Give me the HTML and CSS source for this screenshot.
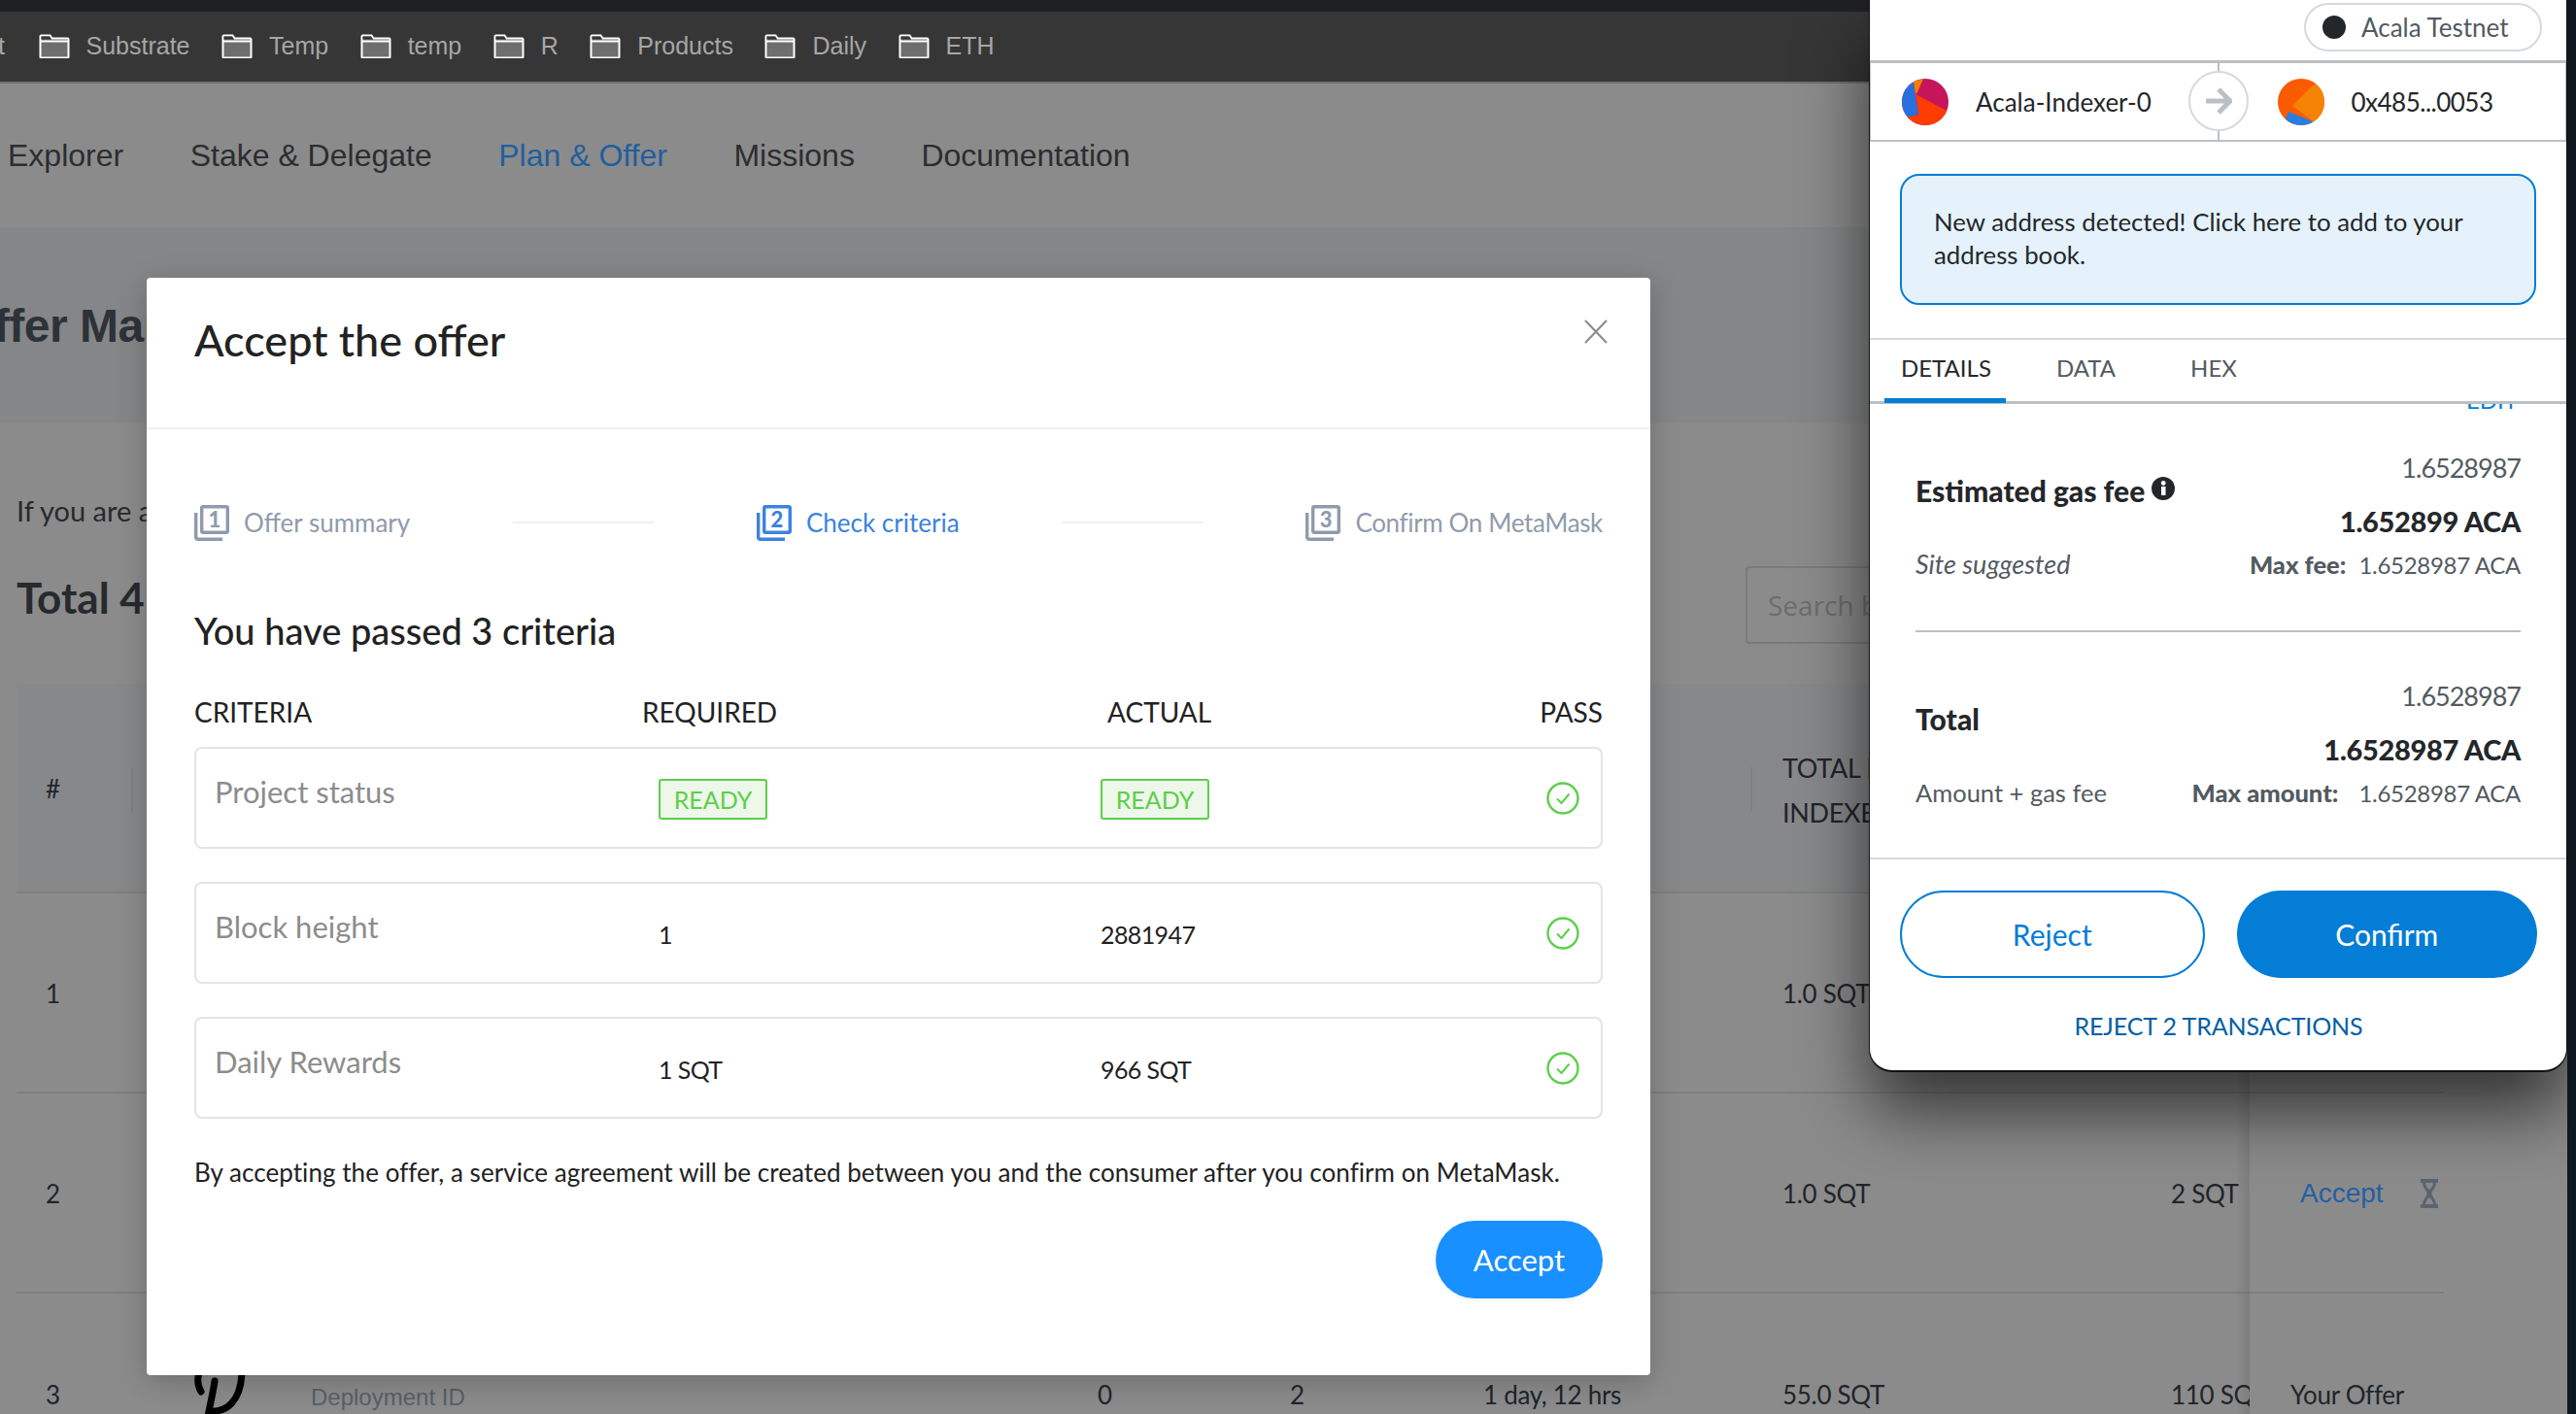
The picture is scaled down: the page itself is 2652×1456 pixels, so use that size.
FILE: index.html
```html
<!DOCTYPE html>
<html lang="en">
<head>
<meta charset="UTF-8" />
<title>Accept the offer</title>
<link rel="stylesheet" href="styles.css">
</head>
<body>
<svg class="defs" width="0" height="0">
  <symbol id="folder" viewBox="0 0 32 25">
    <path d="M1.5 23.5V2.5q0-1 1-1h9l2 3h16q1 0 1 1v18q0 1-1 1h-27q-1 0-1-1z" fill="#6e6e6e" stroke="#fff" stroke-width="2"/>
    <path d="M1.5 7.5h29" stroke="#fff" stroke-width="2"/>
    <path d="M2.5 2.5h8.5l2 3h-10.500z" fill="#363636"/>
  </symbol>
  <symbol id="check" viewBox="0 0 34 34">
    <circle cx="17" cy="17" r="15.500" fill="none" stroke="#5ccf49" stroke-width="2.400"/>
    <path d="M11 17.500l4.500 4.500 8-9.500" fill="none" stroke="#5ccf49" stroke-width="2"/>
  </symbol>
</svg>

<div class="browser">
  <div class="tabstrip"></div>
  <div class="bookmarks">
    <span class="cut">t</span>
    <a class="mark"><svg class="folder"><use href="#folder"/></svg>Substrate</a>
    <a class="mark"><svg class="folder"><use href="#folder"/></svg>Temp</a>
    <a class="mark"><svg class="folder"><use href="#folder"/></svg>temp</a>
    <a class="mark"><svg class="folder"><use href="#folder"/></svg>R</a>
    <a class="mark"><svg class="folder"><use href="#folder"/></svg>Products</a>
    <a class="mark"><svg class="folder"><use href="#folder"/></svg>Daily</a>
    <a class="mark"><svg class="folder"><use href="#folder"/></svg>ETH</a>
  </div>

  <nav class="topnav">
    <a>Explorer</a>
    <a>Stake &amp; Delegate</a>
    <a class="current">Plan &amp; Offer</a>
    <a>Missions</a>
    <a>Documentation</a>
  </nav>

  <div class="page-head">
    <h1>Offer Management</h1>
  </div>

  <section class="intro">
    <p>If you are an indexer</p>
    <div class="intro-row">
      <h2>Total 4</h2>
      <div class="search">Search by deployment</div>
    </div>
  </section>

  <div class="table">
    <div class="thead">
      <span class="th-hash">#</span>
      <span class="sep sep-a"></span>
      <span class="sep sep-b"></span>
      <span class="th-total">TOTAL FEES<br>INDEXED</span>
    </div>
    <div class="row">
      <span>1</span><span></span><span></span><span></span><span></span><span>1.0 SQT</span><span></span><span></span>
    </div>
    <div class="row">
      <span>2</span><span></span><span></span><span></span><span></span><span>1.0 SQT</span><span class="clip">2 SQT</span>
      <span class="action">
        <a>Accept</a>
        <svg class="hourglass" viewBox="0 0 18 30"><path d="M0 0h18v4h-2c0 5-4 7-4.500 11 .5 4 4.500 6 4.500 11h2v4H0v-4h2c0-5 4-7 4.500-11C6 11 2 9 2 4H0z" fill="#5b6570"/><path d="M5 4h8c0 3-2 5-4 7-2-2-4-4-4-7zM5 26c0-3 2-5 4-7 2 2 4 4 4 7z" fill="#8a8a8a"/></svg>
      </span>
    </div>
    <div class="row row-last">
      <span>3</span>
      <span class="deploy">Deployment ID</span>
      <span>0</span><span>2</span><span>1 day, 12 hrs</span><span>55.0 SQT</span><span class="clip">110 SQT</span><span class="your">Your Offer</span>
    </div>
    <div class="fixed-shade"></div>
  </div>

  <svg class="deploy-logo" viewBox="0 0 60 40"><path d="M9-2c-2 6-2 12 2 19M25 6c-1 8-4 22-7 36M19 37c18 2 33-10 34-40" fill="none" stroke="#000" stroke-width="7" stroke-linecap="round"/></svg>

  <div class="modal">
    <header class="modal-head">
      <h3>Accept the offer</h3>
      <svg class="close" viewBox="0 0 24 25"><path d="M1 1l22 23M23 1L1 24" stroke="#8c8c8c" stroke-width="2.200" fill="none"/></svg>
    </header>
    <div class="modal-body">
      <div class="steps">
        <div class="step">
          <svg class="step-icon" viewBox="0 0 36 37"><path d="M1.700 8v25q0 2.300 2.300 2.300h25" fill="none" stroke="currentColor" stroke-width="3.400"/><rect x="7.700" y="1.700" width="26.600" height="26.600" rx="1.500" fill="none" stroke="currentColor" stroke-width="3.400"/><text x="21" y="22.500" text-anchor="middle" class="step-num">1</text></svg>
          Offer summary
        </div>
        <span class="step-line"></span>
        <div class="step step-on">
          <svg class="step-icon" viewBox="0 0 36 37"><path d="M1.700 8v25q0 2.300 2.300 2.300h25" fill="none" stroke="currentColor" stroke-width="3.400"/><rect x="7.700" y="1.700" width="26.600" height="26.600" rx="1.500" fill="none" stroke="currentColor" stroke-width="3.400"/><text x="21" y="22.500" text-anchor="middle" class="step-num">2</text></svg>
          Check criteria
        </div>
        <span class="step-line"></span>
        <div class="step step-last">
          <svg class="step-icon" viewBox="0 0 36 37"><path d="M1.700 8v25q0 2.300 2.300 2.300h25" fill="none" stroke="currentColor" stroke-width="3.400"/><rect x="7.700" y="1.700" width="26.600" height="26.600" rx="1.500" fill="none" stroke="currentColor" stroke-width="3.400"/><text x="21" y="22.500" text-anchor="middle" class="step-num">3</text></svg>
          Confirm On MetaMask
        </div>
      </div>

      <h4>You have passed 3 criteria</h4>

      <div class="crit-head">
        <span>CRITERIA</span><span>REQUIRED</span><span>ACTUAL</span><span>PASS</span>
      </div>
      <div class="crit-row">
        <span class="crit-name">Project status</span>
        <span><b class="badge">READY</b></span>
        <span><b class="badge">READY</b></span>
        <svg class="tick"><use href="#check"/></svg>
      </div>
      <div class="crit-row">
        <span class="crit-name">Block height</span>
        <span class="crit-val">1</span>
        <span class="crit-val">2881947</span>
        <svg class="tick"><use href="#check"/></svg>
      </div>
      <div class="crit-row">
        <span class="crit-name">Daily Rewards</span>
        <span class="crit-val">1 SQT</span>
        <span class="crit-val">966 SQT</span>
        <svg class="tick"><use href="#check"/></svg>
      </div>

      <p class="note">By accepting the offer, a service agreement will be created between you and the consumer after you confirm on MetaMask.</p>
      <div class="modal-foot"><button class="accept">Accept</button></div>
    </div>
  </div>

  <div class="wallet">
    <div class="net-bar">
      <div class="net-pill"><i class="net-dot"></i>Acala Testnet</div>
    </div>
    <div class="route">
      <div class="party">
        <svg class="jazz" viewBox="0 0 48 48"><defs><clipPath id="ca"><circle cx="24" cy="24" r="24"/></clipPath></defs><g clip-path="url(#ca)"><rect width="48" height="48" fill="#c6155a"/><path d="M14 16L48 34V48H0L4 39 17 37z" fill="#fc3c00"/><path d="M12 4L17 37 3 40-2 20 0 5z" fill="#2a6fe0"/><path d="M12 3L22 0 16 14 14 16z" fill="#f47f00"/></g></svg>
        <span>Acala-Indexer-0</span>
      </div>
      <div class="party party-to">
        <svg class="jazz" viewBox="0 0 48 48"><defs><clipPath id="cb"><circle cx="24" cy="24" r="24"/></clipPath></defs><g clip-path="url(#cb)"><rect width="48" height="48" fill="#fa5a00"/><path d="M37 6L15 28 36 44 48 40V10z" fill="#f48304"/><path d="M11 34L36 44V48H10L7 44z" fill="#2a7de1"/><path d="M34 0L38 5 40 2z" fill="#f5119c"/></g></svg>
        <span>0x485...0053</span>
      </div>
      <div class="route-arrow">
        <svg viewBox="0 0 28 28" width="28" height="28"><path d="M1 14H25M14 2L26 14 14 26" fill="none" stroke="#bbc0c5" stroke-width="5"/></svg>
      </div>
    </div>
    <div class="notice">New address detected! Click here to add to your address book.</div>
    <div class="wtabs">
      <span class="wtab wtab-on">DETAILS</span>
      <span class="wtab wtab-data">DATA</span>
      <span class="wtab">HEX</span>
    </div>
    <div class="edit-clip"><span>EDIT</span></div>
    <div class="fee fee-first">
      <div class="fee-top">
        <div class="fee-label">Estimated gas fee
          <svg class="info" viewBox="0 0 24 24"><circle cx="12" cy="12" r="12" fill="#24272a"/><rect x="10" y="10" width="4.500" height="9" fill="#fff"/><circle cx="12.200" cy="6.500" r="2.400" fill="#fff"/></svg>
        </div>
        <div class="fee-amounts">
          <div class="fee-light">1.6528987</div>
          <div class="fee-strong">1.652899 ACA</div>
        </div>
      </div>
      <div class="fee-sub">
        <em>Site suggested</em>
        <span><b>Max fee:</b><i class="fee-val">1.6528987 ACA</i></span>
      </div>
    </div>
    <div class="fee">
      <div class="fee-top">
        <div class="fee-label">Total</div>
        <div class="fee-amounts">
          <div class="fee-light">1.6528987</div>
          <div class="fee-strong">1.6528987 ACA</div>
        </div>
      </div>
      <div class="fee-sub">
        <span>Amount + gas fee</span>
        <span><b class="wide">Max amount:</b><i class="fee-val">1.6528987 ACA</i></span>
      </div>
    </div>
    <div class="wallet-foot">
      <div class="wallet-btns">
        <button class="btn-line">Reject</button>
        <button class="btn-fill">Confirm</button>
      </div>
      <a class="reject-all">REJECT 2 TRANSACTIONS</a>
    </div>
  </div>
</div>
</body>
</html>
```

FILE: styles.css
```css
* {
  box-sizing: border-box;
}
html, body {
  margin: 0;
  height: 100%;
  overflow: hidden;
}
body {
  background: #0f171e;
  font-family: "Lato", sans-serif;
}
.defs {
  position: absolute;
}

/* browser frame */
.browser {
  position: relative;
  width: 2643px;
  height: 1456px;
  overflow: hidden;
  background: #8b8b8b;
}
.tabstrip {
  height: 12px;
  background: #1f2024;
}
.bookmarks {
  display: flex;
  align-items: center;
  gap: 32.500px;
  height: 74px;
  padding-bottom: 2px;
  background: #363636;
  border-bottom: 2px solid #6f6f6f;
  color: #a6a6a6;
  font: 25px "Liberation Sans", sans-serif;
}
.cut {
  margin-left: -2px;
  width: 9px;
}
.mark {
  display: flex;
  align-items: center;
  gap: 17px;
}
.folder {
  width: 32px;
  height: 25px;
}

/* top nav */
.topnav {
  display: flex;
  align-items: center;
  gap: 68.500px;
  height: 148px;
  padding-left: 8px;
  color: #2b2d30;
  font: 32px "Liberation Sans", sans-serif;
}
.topnav .current {
  color: #1f5f9f;
}

/* page behind the modal */
.page-head {
  height: 202px;
  background: #858687;
}
.page-head h1 {
  margin: 0 0 0 -43px;
  padding-top: 74px;
  color: #2c3238;
  font: bold 48px/56px "Liberation Sans", sans-serif;
  letter-spacing: -.5px;
}
.intro {
  height: 268px;
  padding: 72px 0 0 17px;
  color: #262a2e;
}
.intro p {
  margin: 0;
  font-size: 29px;
  line-height: 36px;
}
.intro-row {
  display: flex;
  justify-content: space-between;
  margin-top: 39px;
}
.intro h2 {
  margin: 4px 0 0;
  font-size: 44px;
  line-height: 56px;
}
.search {
  width: 846px;
  height: 80px;
  padding: 0 21px;
  border: 2px solid #7a7a7a;
  border-radius: 4px;
  color: #6d6d6d;
  font: 28px/76px "Open Sans", sans-serif;
}

.table {
  position: relative;
  width: 2499px;
  margin-left: 17px;
  color: #20242a;
  font-size: 26px;
  letter-spacing: -.3px;
}
.thead {
  position: relative;
  height: 216px;
  background: #87888a;
  border-bottom: 2px solid #7e7e7e;
}
.th-hash {
  position: absolute;
  left: 30px;
  top: 92px;
}
.th-total {
  position: absolute;
  left: 1818px;
  top: 64px;
  white-space: nowrap;
  font-size: 27px;
  line-height: 46px;
}
.sep {
  position: absolute;
  top: 86px;
  width: 2px;
  height: 46px;
  background: #7f7f7f;
}
.sep-a {
  left: 118px;
}
.sep-b {
  left: 1785px;
}
.row {
  display: grid;
  grid-template-columns: 273px 810px 198px 199px 308px 400px 81px 1fr;
  align-items: center;
  height: 206px;
  padding: 2px 0 0 30px;
  border-bottom: 2px solid #7e7e7e;
}
.row-last {
  padding-top: 2px;
  border-bottom: 0;
}
.clip {
  overflow: hidden;
  white-space: nowrap;
}
.action {
  display: flex;
  align-items: center;
  gap: 38px;
  padding-left: 52px;
}
.action a {
  color: #2460a4;
  letter-spacing: 0;
  font: 28px "Liberation Sans", sans-serif;
}
.hourglass {
  width: 18px;
  height: 30px;
}
.your {
  padding-left: 42px;
  white-space: nowrap;
}
.deploy {
  padding-top: 5px;
  color: #575f69;
  letter-spacing: 0;
  font: 24px "Liberation Sans", sans-serif;
}
.fixed-shade {
  position: absolute;
  left: 2284px;
  top: 0;
  bottom: 0;
  width: 15px;
  background: linear-gradient(90deg, rgba(0,0,0,0), rgba(0,0,0,.1));
}
.deploy-logo {
  position: absolute;
  left: 196px;
  top: 1416px;
  width: 60px;
  height: 40px;
}

/* modal */
.modal {
  position: absolute;
  left: 151px;
  top: 286px;
  width: 1548px;
  height: 1130px;
  background: #fff;
  border-radius: 4px;
  box-shadow: 0 6px 30px rgba(0, 0, 0, .22);
  color: #222;
}
.modal-head {
  display: flex;
  justify-content: space-between;
  height: 156px;
  padding: 39px 49px 0;
  border-bottom: 2px solid #f0f0f0;
}
.modal-head h3 {
  margin: 0;
  font-size: 45px;
  font-weight: 500;
  line-height: 50px;
}
.close {
  width: 24px;
  height: 25px;
  margin: 4px -5px 0 0;
}
.modal-body {
  padding: 77px 49px 0;
}
.steps {
  display: flex;
  justify-content: space-between;
  align-items: center;
  height: 38px;
}
.step {
  display: flex;
  align-items: center;
  gap: 15px;
  color: #8f9bab;
  font-size: 26px;
}
.step-last {
  letter-spacing: -.35px;
}
.step-on {
  color: #3c82e0;
}
.step-icon {
  width: 36px;
  height: 37px;
}
.step-num {
  fill: currentColor;
  font: 900 22px "Lato", sans-serif;
}
.step-line {
  width: 146px;
  height: 2px;
  background: #f0f0f0;
}
.modal-body h4 {
  margin: 70px 0 0;
  font-size: 38px;
  font-weight: 500;
  line-height: 44px;
}
.crit-head {
  display: grid;
  grid-template-columns: 461px 479px 1fr auto;
  margin-top: 42px;
  font-size: 28px;
  line-height: 40px;
}
.crit-row {
  display: grid;
  grid-template-columns: 457px 455px 1fr 34px;
  align-items: center;
  height: 105px;
  margin-top: 34px;
  padding: 0 22px 0 19px;
  border: 2px solid #e1e4e9;
  border-radius: 8px;
  font-size: 25px;
  letter-spacing: -.6px;
}
.crit-head + .crit-row {
  margin-top: 16px;
}
.crit-name {
  margin-bottom: 14px;
  color: #8c8c8c;
  font-size: 31px;
  letter-spacing: 0;
}
.crit-val {
  margin-top: 2px;
}
.badge {
  display: inline-block;
  width: 112px;
  height: 42px;
  margin-top: 2px;
  border: 2px solid #5ccf49;
  border-radius: 3px;
  background: #edf7ea;
  color: #5ccf49;
  font-size: 25px;
  font-weight: 400;
  letter-spacing: 0;
  line-height: 38px;
  text-align: center;
}
.tick {
  width: 34px;
  height: 34px;
}
.note {
  margin: 37px 0 0;
  font-size: 26px;
  letter-spacing: .05px;
  line-height: 36px;
  white-space: nowrap;
}
.modal-foot {
  display: flex;
  justify-content: flex-end;
  margin-top: 32px;
}
.accept {
  width: 172px;
  height: 80px;
  border: 0;
  border-radius: 40px;
  background: #1890ff;
  box-shadow: 0 3px 0 rgba(0, 0, 0, .03);
  color: #fff;
  font: 31px "Lato", sans-serif;
}

/* wallet popup */
.wallet {
  position: absolute;
  left: 1924px;
  top: 0;
  display: flex;
  flex-direction: column;
  width: 719px;
  height: 1104px;
  background: #fff;
  border: solid #111;
  border-width: 0 1px 2px;
  border-radius: 0 0 24px 24px;
  box-shadow: 0 40px 70px rgba(0, 0, 0, .62);
  color: #24272a;
  font-size: 26px;
}
.net-bar {
  display: flex;
  justify-content: flex-end;
  height: 62px;
  padding: 3px 25px 0 0;
}
.net-pill {
  display: flex;
  align-items: center;
  width: 245px;
  height: 50px;
  padding-left: 17px;
  gap: 16px;
  border: 2px solid #d6d9dc;
  border-radius: 25px;
  color: #535a61;
  white-space: nowrap;
}
.net-dot {
  width: 24px;
  height: 24px;
  border-radius: 50%;
  background: #24272a;
}
.route {
  position: relative;
  display: grid;
  grid-template-columns: 1fr 1fr;
  height: 84px;
  border: solid #bbc0c5;
  border-width: 3px 1px 2px;
}
.party {
  display: flex;
  align-items: center;
  gap: 28px;
  padding-left: 32px;
}
.party-to {
  padding-left: 61px;
  letter-spacing: -.5px;
}
.jazz {
  width: 48px;
  height: 48px;
}
.route::before {
  content: "";
  position: absolute;
  left: 50%;
  top: 0;
  bottom: 0;
  width: 2px;
  margin-left: -1px;
  background: #bbc0c5;
}
.route-arrow {
  position: absolute;
  left: 50%;
  top: 8px;
  display: flex;
  align-items: center;
  justify-content: center;
  width: 62px;
  height: 62px;
  margin-left: -31px;
  border: 2px solid #d6d9dc;
  border-radius: 50%;
  background: #fff;
}
.notice {
  flex: none;
  height: 135px;
  margin: 33px 31px 34px 31px;
  padding: 30px 33px;
  border: 2px solid #037dd6;
  border-radius: 20px;
  background: #e5f2fb;
  font-size: 25.800px;
  line-height: 34px;
}
.wtabs {
  display: flex;
  flex: none;
  height: 68px;
  padding-left: 15px;
  border: solid #d6d9dc;
  border-width: 2px 0 0;
  border-bottom: 3px solid #bbc0c5;
  font-size: 24px;
}
.wtab {
  padding: 14px 17px 0;
  color: #535a61;
  margin-right: 34px;
}
.wtab-on {
  width: 125px;
  height: 65px;
  color: #24272a;
  margin-right: 35px;
  border-bottom: 5px solid #037dd6;
}
.wtab-data {
  margin-right: 43px;
}
.edit-clip {
  flex: none;
  height: 9px;
  padding-right: 50px;
  overflow: hidden;
  color: #037dd6;
  font-size: 24px;
  line-height: 9px;
  text-align: right;
}
.edit-clip span {
  position: relative;
  top: -9px;
}
.fee {
  flex: none;
  padding: 39px 47px 49px;
  border-bottom: 2px solid #d6d9dc;
}
.fee-first {
  position: relative;
  padding: 30px 47px 52px;
  border-bottom: 0;
}
.fee-first::after {
  content: "";
  position: absolute;
  left: 47px;
  right: 47px;
  bottom: 0;
  height: 2px;
  background: #bbc0c5;
}
.fee-top {
  display: flex;
  justify-content: space-between;
  align-items: center;
}
.fee-label {
  display: flex;
  align-items: center;
  gap: 7px;
  margin-bottom: 10px;
  font-size: 30px;
  font-weight: 900;
}
.info {
  width: 24px;
  height: 24px;
  margin-bottom: 4px;
}
.fee-amounts {
  text-align: right;
}
.fee-light {
  color: #535a61;
  font-size: 27px;
  letter-spacing: -1px;
  line-height: 54px;
}
.fee-strong {
  font-size: 29px;
  font-weight: 900;
  letter-spacing: -.3px;
  line-height: 55px;
}
.fee-sub {
  display: flex;
  justify-content: space-between;
  color: #535a61;
  font-size: 25.500px;
  line-height: 34px;
}
.fee-sub em {
  font-size: 27px;
}
.fee-sub b {
  margin-right: 13px;
  font-weight: 900;
}
.fee-sub b.wide {
  margin-right: 21px;
}
.fee-val {
  font-style: normal;
  font-size: 24px;
  letter-spacing: -.3px;
}
.wallet-foot {
  padding: 32px 30px 0 31px;
  text-align: center;
}
.wallet-btns {
  display: flex;
  gap: 33px;
}
.wallet-btns button {
  flex: 1;
  height: 90px;
  border-radius: 45px;
  font: 30px "Lato", sans-serif;
}
.btn-line {
  border: 2px solid #037dd6;
  background: #fff;
  color: #037dd6;
}
.btn-fill {
  border: 0;
  background: #037dd6;
  color: #fff;
}
.reject-all {
  display: block;
  margin-top: 33px;
  color: #0260a4;
  font-size: 25px;
  letter-spacing: -.1px;
  line-height: 32px;
}
```
